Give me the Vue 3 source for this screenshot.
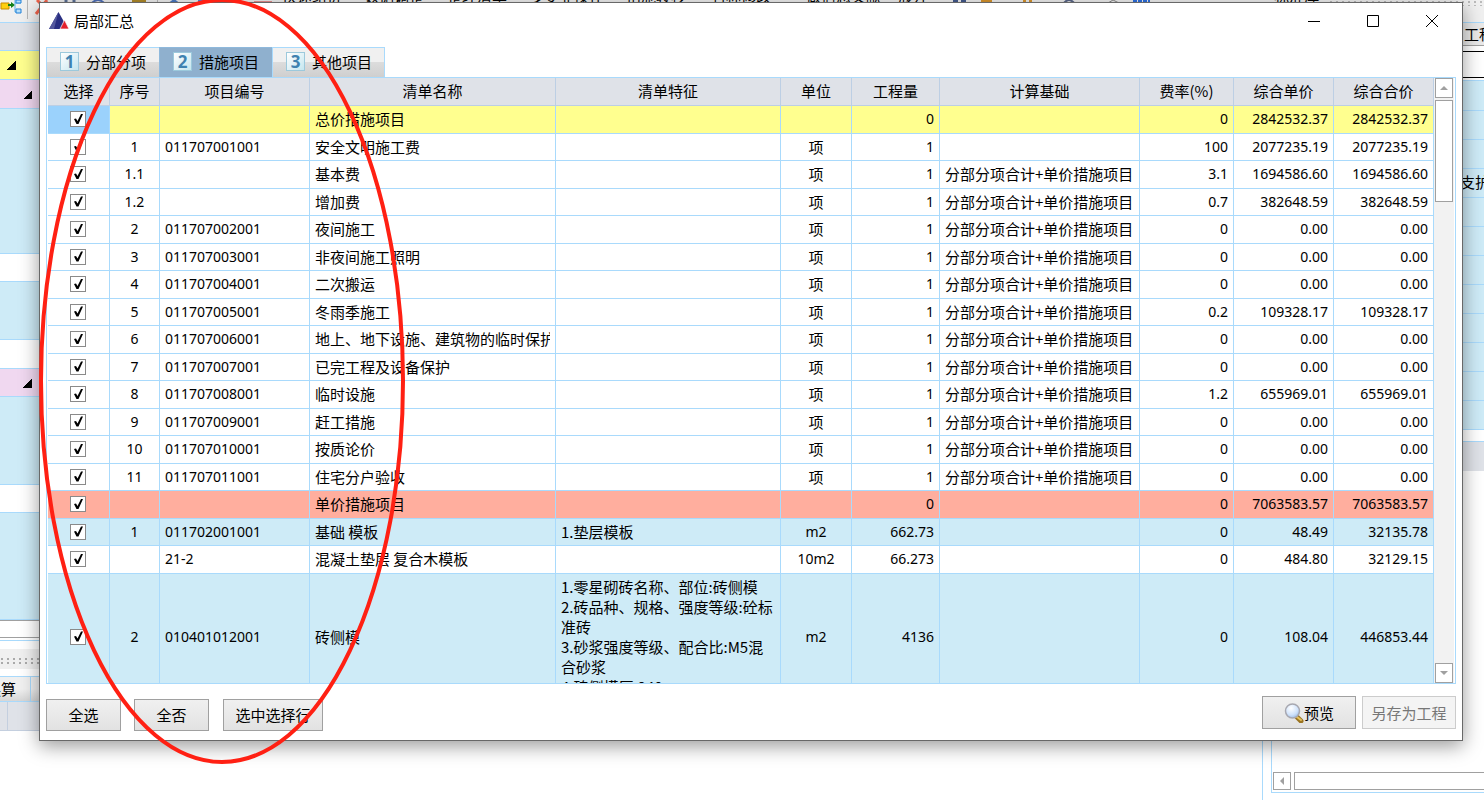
<script setup>
import { ref } from 'vue'

const tabs = ['分部分项', '措施项目', '其他项目']
const active = ref(1)
const tools = [
  ['快速组价', 't-a'], ['数据调整', 't-b'], ['整理清单', 't-c'], ['多专业操作', 't-d'],
  ['措施转移', 't-c'], ['名称修改', 't-e'], ['做信息文献', 't-f'], ['展开', 't-g'],
]
const heads = ['选择', '序号', '项目编号', '清单名称', '清单特征', '单位', '工程量', '计算基础', '费率(%)', '综合单价', '综合合价']
const cols = ['c-sel', 'c-no', 'c-code', 'c-name', 'c-feat', 'c-unit', 'c-qty', 'c-base', 'c-rate', 'c-price', 'c-total']

const base = '分部分项合计+单价措施项目'
const row = (kind, no, code, name, feat, unit, qty, calc, rate, price, total = price) =>
  ({ kind, checked: true, no, code, name, feat, unit, qty, calc, rate, price, total })

const rows = ref([
  row('yellow', '', '', '总价措施项目', '', '', '0', '', '0', '2842532.37'),
  row('', '1', '011707001001', '安全文明施工费', '', '项', '1', '', '100', '2077235.19'),
  row('', '1.1', '', '基本费', '', '项', '1', base, '3.1', '1694586.60'),
  row('', '1.2', '', '增加费', '', '项', '1', base, '0.7', '382648.59'),
  row('', '2', '011707002001', '夜间施工', '', '项', '1', base, '0', '0.00'),
  row('', '3', '011707003001', '非夜间施工照明', '', '项', '1', base, '0', '0.00'),
  row('', '4', '011707004001', '二次搬运', '', '项', '1', base, '0', '0.00'),
  row('', '5', '011707005001', '冬雨季施工', '', '项', '1', base, '0.2', '109328.17'),
  row('', '6', '011707006001', '地上、地下设施、建筑物的临时保护设施', '', '项', '1', base, '0', '0.00'),
  row('', '7', '011707007001', '已完工程及设备保护', '', '项', '1', base, '0', '0.00'),
  row('', '8', '011707008001', '临时设施', '', '项', '1', base, '1.2', '655969.01'),
  row('', '9', '011707009001', '赶工措施', '', '项', '1', base, '0', '0.00'),
  row('', '10', '011707010001', '按质论价', '', '项', '1', base, '0', '0.00'),
  row('', '11', '011707011001', '住宅分户验收', '', '项', '1', base, '0', '0.00'),
  row('red', '', '', '单价措施项目', '', '', '0', '', '0', '7063583.57'),
  row('blue', '1', '011702001001', '基础 模板', '1.垫层模板', 'm2', '662.73', '', '0', '48.49', '32135.78'),
  row('', '', '21-2', '混凝土垫层 复合木模板', '', '10m2', '66.273', '', '0', '484.80', '32129.15'),
  row('blue', '2', '010401012001', '砖侧模',
    '1.零星砌砖名称、部位:砖侧模\n2.砖品种、规格、强度等级:砼标准砖\n3.砂浆强度等级、配合比:M5混合砂浆\n4.砖侧模厚:240',
    'm2', '4136', '', '0', '108.04', '446853.44'),
])
const setAll = (v) => rows.value.forEach((r) => { r.checked = v })

const leftRows = [
  ['head', 28], ['yellow arrow', 29], ['pink arrow deep', 29], ['blue', 145], ['white', 28], ['blue', 58],
  ['white', 29], ['pink arrow deep', 28], ['blue', 88], ['white', 28], ['blue', 107],
]
const sideRows = Array.from({ length: 12 }, (_, i) => i)
</script>

<template>
  <div class="desk">
    <div class="toolbar">
      <svg class="tool-icons" width="282" height="22" viewBox="0 0 282 22">
        <path d="M1 3h8v6H1z" fill="#ffcf10" stroke="#c98b00" />
        <path d="M8 5h5" stroke="#108018" stroke-width="2" />
        <path d="M11 2l4 3-4 3z" fill="#108018" />
        <path d="M15 0v12h6M15 3h6" stroke="#5ab0e8" fill="none" />
        <path d="M16 0h5v3h-5zM16 9h5v4h-5z" fill="#b8e0fa" stroke="#2080d8" />
        <path d="M27.500 0v19" stroke="#b8b8b8" />
        <path d="M36 14L47 0M37 0l4 4" stroke="#f0644c" stroke-width="3" />
        <path d="M66 0v3M74 0v3" stroke="#5a6f94" stroke-width="3" />
        <path d="M92 3q6-6 12 0" stroke="#5070b8" fill="none" stroke-width="2" />
        <path d="M132 0h14v3h-14z" fill="#b08a28" />
        <path d="M157.500 0v3" stroke="#b8b8b8" />
        <path d="M170 3l4-3 4 3" stroke="#4b79c4" fill="none" stroke-width="2" />
        <path d="M198 0h14v3h-14z" fill="#5484d8" />
        <path d="M254 2h18" stroke="#e89090" stroke-width="2" />
      </svg>
      <span v-for="t in tools" :key="t[0]" class="tool" :class="t[1]">{{ t[0] }}</span>
      <svg class="tool-icons more" width="220" height="22" viewBox="0 0 220 22">
        <path d="M3 0h5v3H3zM11 0h5v3h-5z" fill="#42598c" />
        <path d="M31 0h11v3H31z" fill="#d8942c" />
        <path d="M73 0h3v3h-3zM79 0h3v3h-3z" fill="#d8942c" />
        <path d="M114 3q5-6 10 0" stroke="#5a6788" fill="none" stroke-width="2" />
        <path d="M158 3l5-3 6 3" stroke="#888" fill="none" />
        <path d="M183 1h17" stroke="#2c6fe0" stroke-width="3" stroke-dasharray="4 1" />
      </svg>
      <span class="dock-title">标准库</span>
      <span class="dock-dots"></span>
    </div>

    <div class="work">
      <main class="left">
        <div v-for="(r, i) in leftRows" :key="i" class="lrow" :class="r[0]" :style="{ height: r[1] + 'px' }"></div>
        <div class="hscroll"></div>
        <div class="splitter"><span class="dots"></span></div>
        <div class="ltabs"><span class="ltab">换算</span><span class="ltab wide"></span></div>
        <div class="lhead"><span></span></div>
      </main>
      <aside class="right">
        <div class="r-tab">工程</div>
        <div class="r-box"></div>
        <div class="r-grid">
          <div v-for="n in sideRows" :key="n" class="r-row">{{ n === 3 ? '支护' : '' }}</div>
        </div>
        <div class="r-panel">
          <div class="r-head"></div>
          <div class="r-fill"></div>
          <div class="r-scroll">
            <button class="sbtn" aria-label="向左滚动">
              <svg width="8" height="8" viewBox="0 0 8 8"><path d="M6 0v8L2 4z" fill="#a0a0a0" /></svg>
            </button>
            <span class="r-thumb"></span>
          </div>
        </div>
      </aside>
    </div>

    <section class="dialog" role="dialog" aria-labelledby="dlg-title">
      <header class="title">
        <svg width="20" height="18" viewBox="0 0 20 18">
          <path d="M9.500 0L19 17H0z" fill="#2a2f82" />
          <path d="M9.500 0L0 17h5z" fill="#55599e" />
          <path d="M15.500 8L20 17h-9z" fill="#e3202c" stroke="#fff" stroke-width=".7" />
        </svg>
        <h1 id="dlg-title">局部汇总</h1>
        <button class="win" aria-label="最小化"><svg width="14" height="14" viewBox="0 0 14 14"><path d="M1 7.500h12" /></svg></button>
        <button class="win" aria-label="最大化"><svg width="14" height="14" viewBox="0 0 14 14"><path d="M1.500 1.500h11v11h-11z" /></svg></button>
        <button class="win" aria-label="关闭"><svg width="14" height="14" viewBox="0 0 14 14"><path d="M1 1l12 12M13 1L1 13" /></svg></button>
      </header>

      <nav class="tabs" role="tablist">
        <button v-for="(t, i) in tabs" :key="t" role="tab" class="tab" :class="{ on: i === active }"
          :aria-selected="i === active" @click="active = i">
          <span class="num">{{ i + 1 }}</span>{{ t }}
        </button>
      </nav>

      <div class="grid">
        <div class="scroller">
          <table>
            <colgroup><col v-for="c in cols" :key="c" :class="c"></colgroup>
            <thead>
              <tr><th v-for="h in heads" :key="h" scope="col">{{ h }}</th></tr>
            </thead>
            <tbody>
              <tr v-for="(r, i) in rows" :key="i" :class="[r.kind, { tall: i === 17 }]">
                <td class="mid pick" :class="{ current: i === 0 }">
                  <input v-model="r.checked" type="checkbox" :aria-label="'选择 ' + r.name">
                </td>
                <td class="mid lat">{{ r.no }}</td>
                <td class="lat">{{ r.code }}</td>
                <td><div class="clip">{{ r.name }}</div></td>
                <td class="feat">{{ r.feat }}</td>
                <td class="mid" :class="{ lat: r.unit !== '项' }">{{ r.unit }}</td>
                <td class="num-cell lat">{{ r.qty }}</td>
                <td>{{ r.calc }}</td>
                <td class="num-cell lat">{{ r.rate }}</td>
                <td class="num-cell lat">{{ r.price }}</td>
                <td class="num-cell lat">{{ r.total }}</td>
              </tr>
            </tbody>
          </table>
        </div>
        <div class="vscroll">
          <button class="sbtn" aria-label="向上滚动">
            <svg width="8" height="8" viewBox="0 0 8 8"><path d="M0 6h8L4 2z" fill="#a0a0a0" /></svg>
          </button>
          <span class="thumb"></span>
          <button class="sbtn" aria-label="向下滚动">
            <svg width="8" height="8" viewBox="0 0 8 8"><path d="M0 2h8L4 6z" fill="#a0a0a0" /></svg>
          </button>
        </div>
      </div>

      <footer class="actions">
        <button class="btn" @click="setAll(true)">全选</button>
        <button class="btn" @click="setAll(false)">全否</button>
        <button class="btn broad">选中选择行</button>
        <span class="gap"></span>
        <button class="btn main">
          <svg width="20" height="20" viewBox="0 0 20 20">
            <defs>
              <radialGradient id="lens" cx=".4" cy=".3" r=".8">
                <stop offset="0" stop-color="#fff" /><stop offset=".6" stop-color="#cfe2fb" /><stop offset="1" stop-color="#8fb4e4" />
              </radialGradient>
            </defs>
            <path d="M13 14l4 4" stroke="#9a7420" stroke-width="5" stroke-linecap="round" />
            <path d="M13 14l4 3" stroke="#e6c25c" stroke-width="2" stroke-linecap="round" />
            <circle cx="8.500" cy="8" r="7" fill="url(#lens)" stroke="#a8a8b0" stroke-width="1.500" />
          </svg>预览
        </button>
        <button class="btn main off" disabled>另存为工程</button>
      </footer>
    </section>

    <svg class="mark" width="370" height="766" viewBox="0 0 370 766" aria-hidden="true">
      <ellipse cx="184" cy="381" rx="181" ry="381" fill="none" stroke="#ff2013" stroke-width="4" />
    </svg>
  </div>
</template>

<style>
body { margin: 0; overflow: hidden; }
</style>

<style scoped>
* { box-sizing: border-box; }
.desk {
  position: relative; display: flex; flex-direction: column; height: 100vh; overflow: hidden;
  background: #fff; color: #000;
  font: 15px/20px "Noto Sans CJK SC", "Noto Sans", sans-serif;
}
button { font: inherit; color: inherit; padding: 0; margin: 0; }

/* main window */
.toolbar { display: flex; flex: none; height: 23px; background: #f0f0f0; border-bottom: 1px solid #a9dafc; overflow: hidden; white-space: nowrap; }
.tool-icons { flex: none; }
.tool { flex: none; line-height: 20px; margin-top: -14px; }
.t-a { margin-right: 22px; }
.t-b { margin-right: 23px; }
.t-c { margin-right: 22px; }
.t-d { margin-right: 22px; }
.t-e { margin-right: 35px; margin-left: 3px; }
.t-f { margin-right: 17px; }
.t-g { margin-right: 22px; }
.more { margin-right: 104px; }
.dock-title { margin-top: -14px; margin-right: 10px; }
.dock-dots { flex: 1; height: 6px; background: radial-gradient(circle at 2px 2px, #bbb 1px, transparent 1px) 0 0 / 6px 4px; }
.work { display: flex; flex: 1; min-height: 0; }
.left { flex: 1; border-right: 1px solid #a9dafc; overflow: hidden; }
.lrow { border-bottom: 1px solid #a9dafc; }
.head, .lhead, .r-head { background: #dfe2e8; }
.yellow { background: #ffff8f; }
.pink { background: #f0d8f0; }
.blue { background: #ceebf7; }
.white { background: #fff; }
.arrow::before {
  content: ""; display: block; width: 9px; height: 9px; margin-left: 7px; transform: translateY(10px);
  background: linear-gradient(135deg, transparent 50%, #000 50%);
}
.deep::before { margin-left: 23px; }
.hscroll { height: 18px; border: solid #a0a0a0; border-width: 1px 0; background: #fff; }
.splitter { height: 36px; padding-top: 16px; margin-top: 2px; border-top: 1px solid #a9dafc; background: linear-gradient(#fff 8px, #f0f0f0 8px, #f0f0f0 28px, #fff 28px); }
.dots { display: block; height: 8px; background: radial-gradient(circle at 2px 2px, #aaa 1px, transparent 1px) 0 0 / 6px 4px; }
.ltabs { display: flex; height: 26px; border-bottom: 1px solid #a9dafc; }
.ltab { width: 31px; text-indent: -14px; line-height: 24px; overflow: hidden; white-space: nowrap; border: solid #a9dafc; border-width: 1px 1px 0 0; background: linear-gradient(#f0f0f0 50%, #d6d6d6); }
.wide { width: 90px; }
.lhead { height: 29px; border-bottom: 1px solid #c4cfdf; }
.lhead span { display: block; width: 8px; height: 28px; border-right: 1px solid #c4cfdf; }
.right { display: flex; flex-direction: column; width: 221px; padding-left: 8px; overflow: hidden; }
.r-tab { flex: none; height: 23px; text-align: right; margin-right: -10px; line-height: 22px; background: #e9e9e9; border-bottom: 1px solid #a0a0a0; }
.r-box { flex: none; height: 27px; margin: 5px 0 2px; border: 1px solid #000; border-width: 1px 0; }
.r-grid { flex: none; border-bottom: 1px solid #a9dafc; background: #ceebf7; }
.r-row { height: 29px; line-height: 26px; padding-left: 189px; border-top: 1px solid #a9dafc; white-space: nowrap; }
.r-row:first-child { height: 30px; }
.r-panel { flex: 1; display: flex; flex-direction: column; margin: 11px 0 7px; border: 1px solid #a9dafc; border-right: 0; background: #fff; }
.r-head { height: 29px; }
.r-fill { flex: 1; }
.r-scroll { display: flex; gap: 3px; padding-left: 1px; height: 20px; }
.r-thumb { flex: 1; height: 18px; border: 1px solid #a0a0a0; border-right: 0; background: #fff; }
.sbtn { flex: none; display: flex; align-items: center; justify-content: center; width: 18px; height: 18px; border: 1px solid #a0a0a0; background: #fff; }

/* summary dialog */
.dialog {
  position: absolute; left: 39px; right: 21px; top: 2px; bottom: 59px;
  display: flex; flex-direction: column; padding: 0 6px 8px;
  background: #fff; border: 1px solid #686868; box-shadow: 0 5px 18px rgba(0, 0, 0, .4);
}
.title { display: flex; align-items: center; flex: none; height: 36px; padding-left: 3px; }
.title h1 { flex: 1; margin: 0 0 0 5px; font-size: 15px; font-weight: 400; }
.title svg { flex: none; }
.win { width: 46px; height: 30px; margin-left: 13px; border: 0; background: none; display: flex; align-items: center; justify-content: center; }
.win svg { fill: none; stroke: #000; }
.win:last-child { margin-right: 1px; }
.tabs { display: flex; flex: none; height: 38px; padding-top: 8px; align-items: stretch; }
.tab {
  display: flex; align-items: center; gap: 7px; width: 113px; padding: 0 0 2px 13px;
  border: solid #a9dafc; border-width: 1px 0 0 1px; white-space: nowrap;
  background: linear-gradient(#f0f0f0 50%, #dcdcdc 50%, #cfcfcf);
}
.tab:last-child { border-right-width: 1px; }
.tab.on { background: #8fb0ce; border-color: #8fb9dc; }
.num {
  width: 19px; height: 19px; border: 1px solid #9cc9dc; background: linear-gradient(135deg, #fff, #c5e6ef);
  color: #3f82b0; font: bold 17px/17px "Noto Sans", sans-serif; text-align: center;
}
.grid { display: flex; flex: 1; min-height: 0; padding: 0 1px; border: 1px solid #a9dafc; }
.scroller { flex: 1; overflow: hidden; }
table { width: 100%; table-layout: fixed; border-collapse: separate; border-spacing: 0; }
.c-sel { width: 62px; }
.c-no { width: 50px; }
.c-code { width: 150px; }
.c-feat { width: 225px; }
.c-unit { width: 71px; }
.c-qty { width: 88px; }
.c-base { width: 200px; }
.c-rate { width: 94px; }
.c-price, .c-total { width: 100px; }
th, td { padding: 0 5px 1px; border: solid #a9dafc; border-width: 0 1px 1px 0; white-space: nowrap; overflow: hidden; }
th { height: 28px; background: #dfe2e8; border-color: #bdcfe4; font-weight: 400; }
td { height: 27px; line-height: 20px; }
tbody tr:nth-child(odd) td { height: 28px; }
tbody tr.tall td { height: 127px; }
.clip { overflow: hidden; }
.red { background: #ffae9e; }
.feat { white-space: pre-line; word-break: break-all; }
.mid { text-align: center; }
.lat { font-family: "Noto Sans", sans-serif; font-size: 14px; }
.num-cell { text-align: right; }
.current { background: #9bd2fc; }
.pick { padding-right: 6px; }
.pick input {
  appearance: none; display: block; width: 16px; height: 16px; margin: 0 auto;
  border: 1px solid #8a8a8a; background: #fff;
}
.pick input:checked::before {
  content: ""; display: block; width: 14px; height: 14px; background: #000;
  clip-path: path("M3 7L5 6.500L6.500 9L10 2H12L7.500 12H5.500Z");
}
.vscroll { display: flex; flex-direction: column; gap: 2px; width: 20px; padding-left: 1px; background: #f2f2f2; }
.vscroll .sbtn:first-child, .vscroll .sbtn:last-child { height: 20px; }
.vscroll .sbtn:last-child { margin-top: auto; }
.thumb { width: 18px; height: 102px; border: 1px solid #a0a0a0; background: #fff; }
.actions { display: flex; flex: none; padding-top: 12px; height: 48px; }
.btn { width: 75px; height: 32px; margin: 3px 13px 0 0; border: 1px solid #a0a0a0; background: linear-gradient(#f0f0f0, #e2e2e2); white-space: nowrap; }
.broad { width: 100px; margin-left: 1px; }
.gap { flex: 1; }
.main { display: flex; align-items: center; justify-content: center; width: 94px; height: 33px; margin: 0 6px 0 0; }
.off { margin-right: 0; border-color: #ccc; background: #f4f4f4; color: #777; }
.mark { position: absolute; left: 38px; top: 0; pointer-events: none; }
</style>
